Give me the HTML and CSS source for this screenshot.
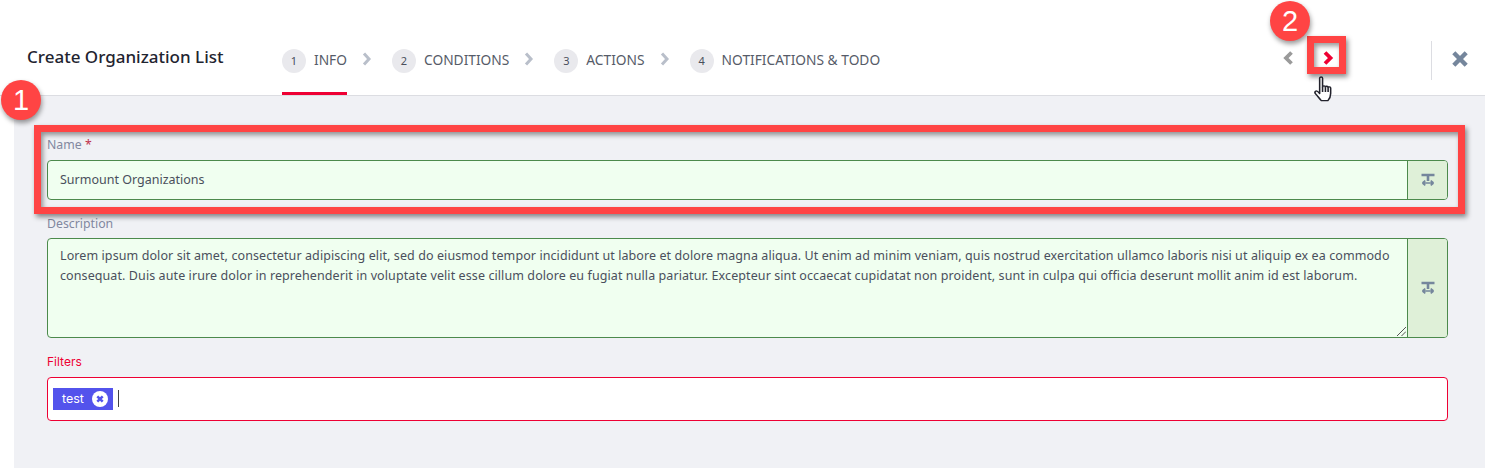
FILE: index.html
```html
<!DOCTYPE html>
<html lang="en">
<head>
<meta charset="utf-8">
<title>Create Organization List</title>
<link rel="stylesheet" href="styles.css">
</head>
<body>
<header class="header">
  <h1 class="title">Create Organization List</h1>
  <nav class="steps">
    <div class="step active"><span class="num">1</span><span class="step-label">INFO</span></div>
    <svg class="sep" viewBox="0 0 10 14"><path d="M2 1.500 7 7l-5 5.500" /></svg>
    <div class="step"><span class="num">2</span><span class="step-label">CONDITIONS</span></div>
    <svg class="sep" viewBox="0 0 10 14"><path d="M2 1.500 7 7l-5 5.500" /></svg>
    <div class="step"><span class="num">3</span><span class="step-label">ACTIONS</span></div>
    <svg class="sep" viewBox="0 0 10 14"><path d="M2 1.500 7 7l-5 5.500" /></svg>
    <div class="step"><span class="num">4</span><span class="step-label">NOTIFICATIONS &amp; TODO</span></div>
  </nav>
  <div class="pager">
    <svg class="pg prev" viewBox="0 0 12 16"><path d="M9.500 2.500 4 8l5.500 5.500" /></svg>
    <svg class="pg next" viewBox="0 0 12 16"><path d="M3 2.500 8.500 8 3 13.500" /></svg>
  </div>
  <div class="close-wrap">
    <svg class="close" viewBox="0 0 18 18"><path d="M2.800 2.800l12.400 12.400M15.200 2.800 2.800 15.200" /></svg>
  </div>
</header>
<main class="content">
  <div class="field name-field">
    <label class="label">Name <span class="req">*</span></label>
    <div class="control ok short">
      <div class="value">Surmount Organizations</div>
      <div class="addon"><svg class="addon-icon" viewBox="0 0 14 14"><path d="M.5 2h13M7 2v6" /><path class="thin" d="M1.500 10h11M1.500 10l2.800-2.300M1.500 10l2.800 2.300M12.500 10l-2.800-2.300M12.500 10l-2.800 2.300" /></svg></div>
    </div>
  </div>
  <div class="field desc-field">
    <label class="label">Description</label>
    <div class="control ok tall">
      <div class="value multi">Lorem ipsum dolor sit amet, consectetur adipiscing elit, sed do eiusmod tempor incididunt ut labore et dolore magna aliqua. Ut enim ad minim veniam, quis nostrud exercitation ullamco laboris nisi ut aliquip ex ea commodo<br>consequat. Duis aute irure dolor in reprehenderit in voluptate velit esse cillum dolore eu fugiat nulla pariatur. Excepteur sint occaecat cupidatat non proident, sunt in culpa qui officia deserunt mollit anim id est laborum.
        <svg class="grip" viewBox="0 0 9 9"><path d="M0 9 9 0M4.500 9 9 4.500" /></svg>
      </div>
      <div class="addon"><svg class="addon-icon" viewBox="0 0 14 14"><path d="M.5 2h13M7 2v6" /><path class="thin" d="M1.500 10h11M1.500 10l2.800-2.300M1.500 10l2.800 2.300M12.500 10l-2.800-2.300M12.500 10l-2.800 2.300" /></svg></div>
    </div>
  </div>
  <div class="field filter-field">
    <label class="label error">Filters</label>
    <div class="control bad">
      <span class="chip">test<svg class="chip-x" viewBox="0 0 16 16"><circle cx="8" cy="8" r="8" /><path d="M5.300 5.300l5.400 5.400M10.700 5.300l-5.400 5.400" /></svg></span>
      <span class="caret"></span>
    </div>
  </div>
</main>
<div class="mark-box box-a"></div>
<div class="mark-box box-b"></div>
<div class="badge badge-a">1</div>
<div class="badge badge-b">2</div>
<svg class="hand" viewBox="0 0 18 26" preserveAspectRatio="none"><path d="M6 2.200c0-1.600 2.600-1.600 2.600 0V11c.2-1.500 2.500-1.400 2.600.1.200-1.200 2.300-1.100 2.400.3.400-.9 2.200-.7 2.300.7v5.500c0 3-1.200 5.500-2.500 7H7.500c-1.500-1.700-3-4-5-6.500-.8-1-.9-2.300-.2-2.900.8-.6 2 0 3.700 2.300z" /><path d="M8.600 11v5M11.200 11.300v4.700M13.600 11.500V16" /></svg>
</body>
</html>
```
FILE: styles.css
```css
* { box-sizing: border-box; }
html, body { margin: 0; height: 468px; overflow: hidden; background: #fff; }
body { font-family: "Noto Sans", "Open Sans", sans-serif; color: #4a4f5c; position: relative; }

.header { height: 96px; display: flex; align-items: flex-start; border-bottom: 1px solid #dcdde2; background: #fff; }
.title { margin: 45px 0 0 27px; width: 255px; font-size: 17px; line-height: 24px; font-weight: 500; color: #1f2430; white-space: nowrap; }
.steps { display: flex; align-items: flex-start; height: 95px; }
.step { display: flex; height: 95px; padding-top: 49px; align-items: flex-start; border-bottom: 3px solid transparent; }
.step.active { border-bottom-color: #ee0033; }
.num { width: 24px; height: 24px; border-radius: 50%; background: #e9e9ed; font-size: 11px; line-height: 24px; text-align: center; color: #4a4f5c; }
.step-label { margin-left: 8px; font-size: 13.75px; line-height: 22px; color: #565b68; white-space: nowrap; }
.sep { width: 10px; height: 14px; margin: 52px 20px 0 15px; fill: none; stroke: #b9bfca; stroke-width: 3; }
.pager { margin-left: auto; display: flex; gap: 28px; padding-top: 50px; }
.pg { width: 12px; height: 16px; fill: none; stroke-width: 3.8; }
.prev { stroke: #9a9a9a; }
.next { stroke: #ee0033; }
.close-wrap { margin: 41px 0 0 97px; width: 54px; height: 39px; border-left: 1px solid #dcdde2; display: flex; justify-content: center; align-items: center; padding: 0 0 3px 3px; }
.close { width: 18px; height: 18px; fill: none; stroke: #75869c; stroke-width: 4.4; }

.content { margin-left: 14px; height: 372px; background: #f0f1f5; padding: 39px 37px 0 33px; display: flex; flex-direction: column; }
.field { display: flex; flex-direction: column; }
.label { font-size: 12.3px; line-height: 20px; height: 20px; color: #8288a0; margin-bottom: 5px; }
.req { color: #c0304a; }
.label.error { font-family: "Inter", sans-serif; font-size: 12px; color: #ee0033; }
.desc-field { margin-top: 14px; }
.desc-field .label { margin-bottom: 4px; }
.filter-field { margin-top: 14px; }
.filter-field .label { margin-bottom: 5px; }

.control { display: flex; border-radius: 4px; border: 1px solid #4c8a4c; overflow: hidden; }
.short { height: 40px; }
.tall { height: 100px; }
.ok { background: #f0fff0; }
.value { flex: 1; min-width: 0; padding: 0 12px; font-size: 12.5px; line-height: 38px; color: #4a4f5c; white-space: nowrap; position: relative; }
.multi { letter-spacing: 0.09px; line-height: 20px; padding: 7px 12px; }
.grip { position: absolute; right: 1px; bottom: 1px; width: 9px; height: 9px; fill: none; stroke: #555; stroke-width: 1; }
.addon { width: 40px; flex: none; background: #dff0d8; border-left: 1px solid #4c8a4c; display: flex; align-items: center; justify-content: center; }
.addon-icon { width: 14px; height: 14px; fill: none; stroke: #75869c; stroke-width: 2.6; }
.addon-icon .thin { stroke-width: 1.7; }

.bad { height: 44px; background: #fff; border-color: #ee0033; align-items: flex-start; padding: 10px 0 0 5px; }
.chip { height: 22px; width: 60px; flex: none; background: #5353ec; color: #fff; font-family: "Inter", sans-serif; font-size: 12.5px; line-height: 20px; padding-left: 9px; display: flex; gap: 8px; align-items: center; }
.chip-x { width: 16px; height: 16px; fill: #fff; stroke: #5353ec; stroke-width: 2.5; }
.chip-x circle { stroke: none; }
.caret { width: 1px; height: 17px; margin: 2px 0 0 5px; background: #444; }

.mark-box { position: absolute; border: 7px solid #ff4444; box-shadow: 2px 3px 5px rgba(0,0,0,.45), inset 2px 3px 5px rgba(0,0,0,.4); }
.box-a { left: 34px; top: 125px; width: 1431px; height: 89px; }
.box-b { left: 1307px; top: 36px; width: 39px; height: 38px; }
.badge { position: absolute; width: 40px; height: 40px; border-radius: 50%; background: #ff4444; color: #fff; font-family: "Liberation Sans", sans-serif; font-size: 29px; line-height: 40px; text-align: center; box-shadow: 1px 3px 5px rgba(0,0,0,.4); }
.badge-a { left: 1px; top: 80px; }
.badge-b { left: 1270px; top: 1px; }
.hand { position: absolute; left: 1313px; top: 76px; width: 20px; height: 26px; fill: #fff; stroke: #22222c; stroke-width: 1.4; stroke-linejoin: round; }
```
